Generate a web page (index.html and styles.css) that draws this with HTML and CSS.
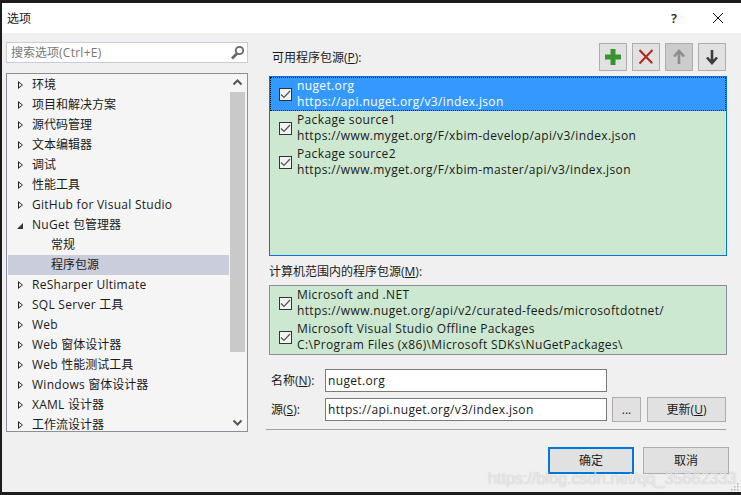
FILE: index.html
```html
<!DOCTYPE html>
<html lang="zh-CN">
<head>
<meta charset="utf-8">
<title>选项</title>
<link rel="stylesheet" href="styles.css">
</head>
<body>
<div class="window">
  <header class="titlebar">
    <span class="title">选项</span>
    <span class="help">?</span>
    <svg class="close" width="12" height="12" viewBox="0 0 12 12"><path d="M1 1l10 10M11 1L1 11" stroke="#111" stroke-width="1" fill="none"/></svg>
  </header>
  <main class="content">
    <aside class="left">
      <div class="search">
        <span class="search-text">搜索选项<span class="en">(Ctrl+E)</span></span>
        <svg width="15" height="15" viewBox="0 0 15 15"><circle cx="9.5" cy="5.5" r="3.7" fill="none" stroke="#666" stroke-width="1.8"/><path d="M7 8.5L2 13.5" stroke="#666" stroke-width="2.6"/></svg>
      </div>
      <div class="tree">
        <ul class="tree-list">
          <li class="row"><i class="tri"></i>环境</li>
          <li class="row"><i class="tri"></i>项目和解决方案</li>
          <li class="row"><i class="tri"></i>源代码管理</li>
          <li class="row"><i class="tri"></i>文本编辑器</li>
          <li class="row"><i class="tri"></i>调试</li>
          <li class="row"><i class="tri"></i>性能工具</li>
          <li class="row"><i class="tri"></i><span class="en">GitHub for Visual Studio</span></li>
          <li class="row"><i class="tri-open"></i><span class="en">NuGet </span>包管理器</li>
          <li class="row sub">常规</li>
          <li class="row sub selected">程序包源</li>
          <li class="row"><i class="tri"></i><span class="en">ReSharper Ultimate</span></li>
          <li class="row"><i class="tri"></i><span class="en">SQL Server </span>工具</li>
          <li class="row"><i class="tri"></i><span class="en">Web</span></li>
          <li class="row"><i class="tri"></i><span class="en">Web </span>窗体设计器</li>
          <li class="row"><i class="tri"></i><span class="en">Web </span>性能测试工具</li>
          <li class="row"><i class="tri"></i><span class="en">Windows </span>窗体设计器</li>
          <li class="row"><i class="tri"></i><span class="en">XAML </span>设计器</li>
          <li class="row"><i class="tri"></i>工作流设计器</li>
        </ul>
        <div class="scrollbar">
          <svg class="arrow" width="15" height="17" viewBox="0 0 15 17"><path d="M3.5 10.5l4-4 4 4" fill="none" stroke="#555" stroke-width="2"/></svg>
          <div class="track"><div class="thumb"></div></div>
          <svg class="arrow" width="15" height="17" viewBox="0 0 15 17"><path d="M3.5 6.5l4 4 4-4" fill="none" stroke="#555" stroke-width="2"/></svg>
        </div>
      </div>
    </aside>
    <section class="right">
      <div class="head">
        <span class="label">可用程序包源(<u>P</u>):</span>
        <div class="tools">
          <button class="tool"><svg width="18" height="18" viewBox="0 0 18 18"><path d="M6.500 1h5v5.500H17v5h-5.500V17h-5v-5.500H1v-5h5.500z" fill="#3a9331"/></svg></button>
          <button class="tool"><svg width="16" height="16" viewBox="0 0 16 16"><path d="M1.500 1.500L14.500 14.500" stroke="#999" stroke-width="1.500"/><path d="M14.500 1L1.500 14.500M1.500 1L14 14" stroke="#b02a1a" stroke-width="2"/></svg></button>
          <button class="tool off"><svg width="14" height="16" viewBox="0 0 14 16"><path d="M7 15V3M2 7.500L7 2l5 5.500" fill="none" stroke="#8d8d8d" stroke-width="2.600"/></svg></button>
          <button class="tool"><svg width="14" height="16" viewBox="0 0 14 16"><path d="M7 1v12M2 8.500L7 14l5-5.500" fill="none" stroke="#3c3c3c" stroke-width="2.600"/></svg></button>
        </div>
      </div>
      <div class="list list-main">
        <div class="item active"><span class="check"><svg width="11" height="9" viewBox="0 0 11 9"><path d="M1 4.500L4 7.500 10 1" fill="none" stroke="#555" stroke-width="1.200"/></svg></span><div><div>nuget.org</div><div>https://api.nuget.org/v3/index.json</div></div></div>
        <div class="item"><span class="check"><svg width="11" height="9" viewBox="0 0 11 9"><path d="M1 4.500L4 7.500 10 1" fill="none" stroke="#555" stroke-width="1.200"/></svg></span><div><div>Package source1</div><div>https://www.myget.org/F/xbim-develop/api/v3/index.json</div></div></div>
        <div class="item"><span class="check"><svg width="11" height="9" viewBox="0 0 11 9"><path d="M1 4.500L4 7.500 10 1" fill="none" stroke="#555" stroke-width="1.200"/></svg></span><div><div>Package source2</div><div>https://www.myget.org/F/xbim-master/api/v3/index.json</div></div></div>
      </div>
      <div class="label label-machine">计算机范围内的程序包源(<u>M</u>):</div>
      <div class="list list-machine">
        <div class="item"><span class="check"><svg width="11" height="9" viewBox="0 0 11 9"><path d="M1 4.500L4 7.500 10 1" fill="none" stroke="#555" stroke-width="1.200"/></svg></span><div><div>Microsoft and .NET</div><div>https://www.nuget.org/api/v2/curated-feeds/microsoftdotnet/</div></div></div>
        <div class="item"><span class="check"><svg width="11" height="9" viewBox="0 0 11 9"><path d="M1 4.500L4 7.500 10 1" fill="none" stroke="#555" stroke-width="1.200"/></svg></span><div><div>Microsoft Visual Studio Offline Packages</div><div>C:\Program Files (x86)\Microsoft SDKs\NuGetPackages\</div></div></div>
      </div>
      <div class="form">
        <span class="field-label">名称(<u>N</u>):</span>
        <div class="input">nuget.org</div>
        <span></span><span></span>
        <span class="field-label">源(<u>S</u>):</span>
        <div class="input">https://api.nuget.org/v3/index.json</div>
        <button class="btn btn-dots">...</button>
        <button class="btn btn-update">更新(<u>U</u>)</button>
      </div>
      <hr class="rule">
      <div class="actions">
        <button class="btn btn-main primary">确定</button>
        <button class="btn btn-main">取消</button>
      </div>
    </section>
  </main>
  <span class="watermark">https://blog.csdn.net/qq_35662333</span>
  <svg class="grip" width="9" height="9" viewBox="0 0 9 9"><path d="M7 1h1.500v1.500H7zM4 4h1.500v1.500H4zM7 4h1.500v1.500H7zM1 7h1.500v1.500H1zM4 7h1.500v1.500H4zM7 7h1.500v1.500H7z" fill="#b5b5b5"/></svg>
</div>
</body>
</html>
```
FILE: styles.css
```css
* { box-sizing: border-box; }
html, body { height: 100%; }
body {
  margin: 0;
  padding: 3px 0 3px 2px;
  background: #1c1c1c;
  overflow: hidden;
  font: 12px/17px "Open Sans", "Noto Sans CJK SC", sans-serif;
  color: #1a1a1a;
}
u { text-decoration: underline; }
.en { letter-spacing: .27px; }
.window {
  position: relative;
  width: 739px;
  height: 489px;
  background: #f0f0f0;
  overflow: hidden;
  display: flex;
  flex-direction: column;
}
.titlebar {
  height: 30px;
  background: #fff;
  display: flex;
  align-items: center;
  flex: none;
}
.title { margin-left: 5px; font-size: 12px; }
.help { margin-left: auto; margin-right: 35px; font-size: 13px; font-weight: 600; }
.close { margin-right: 17px; }
.content {
  flex: 1;
  display: flex;
  min-height: 0;
}
.left {
  width: 242px;
  margin-left: 4px;
  padding-top: 9px;
  flex: none;
}
.search {
  height: 21px;
  background: #fff;
  border: 1px solid #c9cbdc;
  display: flex;
  align-items: center;
  justify-content: space-between;
  padding: 0 2px 0 4px;
  color: #777;
}
.tree {
  margin-top: 10px;
  height: 359px;
  background: #f5f5f5;
  border: 1px solid #8a8f99;
  display: flex;
  overflow: hidden;
}
.tree-list {
  list-style: none;
  margin: 0;
  padding: 1px 0 0 1px;
  width: 222px;
  flex: none;
}
.row {
  height: 20px;
  line-height: 20px;
  padding-left: 24px;
  position: relative;
  white-space: nowrap;
}
.row.sub { padding-left: 43px; }
.row.selected { background: #cacddb; }
.tri {
  position: absolute;
  left: 10px;
  top: 6px;
  width: 0;
  height: 0;
  border-left: 5px solid #222;
  border-top: 4.500px solid transparent;
  border-bottom: 4.500px solid transparent;
}
.tri::after {
  content: "";
  position: absolute;
  left: -4px;
  top: -2.500px;
  border-left: 3px solid #f5f5f5;
  border-top: 2.500px solid transparent;
  border-bottom: 2.500px solid transparent;
}
.tri-open {
  position: absolute;
  left: 9px;
  top: 8px;
  width: 0;
  height: 0;
  border-bottom: 6px solid #333;
  border-left: 6px solid transparent;
}
.scrollbar {
  width: 15px;
  margin-left: 1px;
  display: flex;
  flex-direction: column;
  flex: none;
}
.arrow { flex: none; }
.track { flex: 1; min-height: 0; }
.thumb { height: 260px; background: #c9c9c9; margin-top: 1px; }
.right {
  width: 458px;
  margin-left: 21px;
  flex: none;
}
.head {
  height: 43px;
  padding: 10px 1px 0 3px;
  display: flex;
  justify-content: space-between;
}
.head .label { margin-top: 6px; }
.tools { display: flex; gap: 5px; }
.tool {
  width: 28px;
  height: 28px;
  padding: 0;
  border: 1px solid #adadad;
  background: #e1e1e1;
  display: flex;
  align-items: center;
  justify-content: center;
}
.tool.off { background: #ccc; }
.list {
  background: #cce8d0;
  border: 1px solid #8a8f99;
  padding: 1px 0;
  letter-spacing: .36px;
}
.list-main {
  height: 180px;
  border-color: #0078d7;
  padding-top: 0;
}
.list-machine { height: 70px; padding: 0; }
.item {
  height: 34px;
  display: flex;
  align-items: center;
  line-height: 16.500px;
  white-space: nowrap;
}
.item.active {
  background: #3399ff;
  color: #fff;
  outline: 1px dotted #111;
  outline-offset: -1px;
}
.check {
  width: 13px;
  height: 13px;
  margin: 0 5px 0 9px;
  border: 1px solid #333;
  background: #f2f2f2;
  display: flex;
  align-items: center;
  justify-content: center;
  flex: none;
}
.label-machine { margin-top: 7px; height: 22px; }
.form {
  margin-top: 14px;
  display: grid;
  grid-template-columns: 56px 282px 40px 79px;
  grid-template-rows: 23px 23px;
  row-gap: 6px;
  align-items: center;
}
.field-label { padding-left: 2px; }
.input {
  height: 23px;
  background: #fff;
  border: 1px solid #7a7a7a;
  line-height: 21px;
  padding-left: 2px;
  white-space: nowrap;
  letter-spacing: .33px;
}
.btn {
  font: inherit;
  color: inherit;
  background: #e1e1e1;
  border: 1px solid #adadad;
  padding: 0;
}
.btn-dots { width: 29px; height: 25px; margin-left: 5px; }
.btn-update { width: 79px; height: 25px; }
.rule {
  margin: 8px 0 0 -3px;
  height: 1px;
  width: 460px;
  border: 0;
  background: #a0a0a0;
}
.actions {
  margin-top: 17px;
  display: flex;
  gap: 9px;
  margin-left: 279px;
}
.btn-main { width: 86px; height: 27px; flex: none; }
.btn-main.primary { border: 2px solid #0078d7; }
.watermark {
  position: absolute;
  left: 486px;
  top: 467px;
  font: 16.200px/16px "Liberation Sans", sans-serif;
  color: rgba(255,255,255,.65);
  text-shadow: 0 0 1px rgba(120,120,120,.5);
  white-space: nowrap;
}
.grip { position: absolute; right: 2px; bottom: 1px; }
```
